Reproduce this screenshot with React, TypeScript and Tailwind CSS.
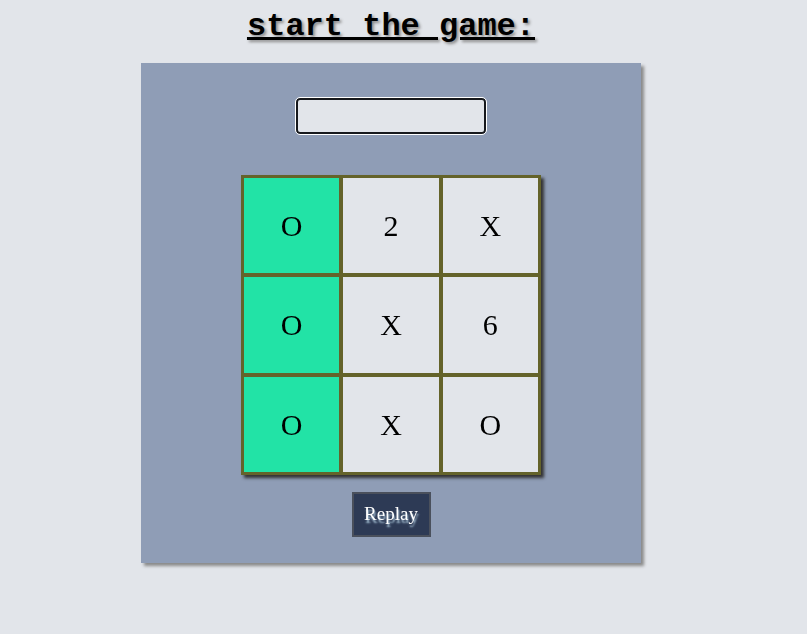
import { useState } from "react";

const cells = ["O", "2", "X", "O", "X", "6", "O", "X", "O"];
const winners = [0, 3, 6];

function Cell({ value, win }: { value: string; win: boolean }) {
  return (
    <div
      className={`flex items-center justify-center text-[30px] text-black ${
        win ? "bg-[#22e3a6]" : "bg-[#e2e5ea]"
      }`}
      style={{ fontFamily: '"Liberation Serif", serif' }}
    >
      {value}
    </div>
  );
}

function App() {
  const [name, setName] = useState("");

  return (
    <div className="min-h-screen w-full bg-[#e2e5ea]">
      <div className="flex w-[782px] flex-col items-center">
        <h1
          className="mt-[7px] h-[40px] text-[32px] font-bold leading-[40px] text-black underline [text-shadow:2px_2px_3px_#8a8a8a]"
          style={{ fontFamily: '"Liberation Mono", monospace' }}
        >
          start the game:
        </h1>
        <div className="mt-[16px] flex h-[500px] w-[500px] flex-col items-center bg-[#8f9db6] shadow-[3px_3px_3px_#8a8a8a]">
          <input
            autoFocus
            value={name}
            onChange={(e) => setName(e.target.value)}
            className="mt-[35px] h-[36px] w-[190px] rounded-[4px] border-2 border-[#16181c] bg-[#e2e5ea] px-2 outline outline-1 outline-white"
          />
          <div className="mt-[41px] grid h-[300px] w-[300px] grid-cols-3 grid-rows-3 gap-[4px] bg-[#64632a] p-[3px] shadow-[3px_3px_3px_#333]">
            {cells.map((c, i) => (
              <Cell key={i} value={c} win={winners.includes(i)} />
            ))}
          </div>
          <button
            className="mt-[17px] h-[45px] w-[79px] border-2 border-[#4a505c] bg-[#2d3a55] text-[19px] text-white [text-shadow:1px_3px_2px_#a9c4d8]"
            style={{ fontFamily: '"Liberation Serif", serif' }}
          >
            Replay
          </button>
        </div>
      </div>
    </div>
  );
}

export default App;
